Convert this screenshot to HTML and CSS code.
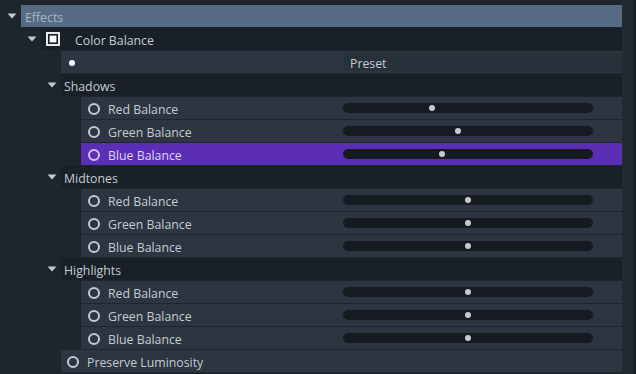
FILE: index.html
```html
<!DOCTYPE html>
<html lang="en">
  <head>
    <meta charset="UTF-8" />
    <title>Effects</title>
    <link rel="stylesheet" href="styles.css">
  </head>
  <body>
    <div class="panel">
      <div class="tree">
        <!-- Effects -->
        <div class="row">
          <span class="twisty"><svg width="10" height="6" viewBox="0 0 10 6"><polygon points="0.5,0.5 9.5,0.5 5,5.5" /></svg></span>
          <div class="cell cell-effects"><span class="label">Effects</span></div>
        </div>

        <!-- Color Balance -->
        <div class="row lvl1">
          <span class="twisty"><svg width="10" height="6" viewBox="0 0 10 6"><polygon points="0.5,0.5 9.5,0.5 5,5.5" /></svg></span>
          <div class="cell cell-dark">
            <svg class="check" width="14" height="14" viewBox="0 0 14 14">
              <rect x="1" y="1" width="12" height="12" fill="none" stroke="#fff" stroke-width="1.8" />
              <rect x="3.6" y="3.6" width="6.8" height="6.8" fill="#fff" />
            </svg>
            <span class="label">Color Balance</span>
          </div>
        </div>

        <div class="row lvl2">
          <span class="twisty"></span>
          <div class="cell">
            <span class="bullet"></span>
            <span class="label"></span>
            <div class="value"><span class="preset">Preset</span></div>
          </div>
        </div>

        <!-- Shadows -->
        <div class="row lvl2">
          <span class="twisty"><svg width="10" height="6" viewBox="0 0 10 6"><polygon points="0.5,0.5 9.5,0.5 5,5.5" /></svg></span>
          <div class="cell cell-dark"><span class="label label-group">Shadows</span></div>
        </div>
        <div class="row lvl3">
          <span class="twisty"></span>
          <div class="cell"><span class="radio"></span><span class="label">Red Balance</span>
            <div class="value"><div class="track"><span class="knob" style="left: 35.6%"></span></div></div></div>
        </div>
        <div class="row lvl3">
          <span class="twisty"></span>
          <div class="cell"><span class="radio"></span><span class="label">Green Balance</span>
            <div class="value"><div class="track"><span class="knob" style="left: 46%"></span></div></div></div>
        </div>
        <div class="row lvl3">
          <span class="twisty"></span>
          <div class="cell selected"><span class="radio"></span><span class="label">Blue Balance</span>
            <div class="value"><div class="track"><span class="knob" style="left: 39.6%"></span></div></div></div>
        </div>

        <!-- Midtones -->
        <div class="row lvl2">
          <span class="twisty"><svg width="10" height="6" viewBox="0 0 10 6"><polygon points="0.5,0.5 9.5,0.5 5,5.5" /></svg></span>
          <div class="cell cell-dark"><span class="label label-group">Midtones</span></div>
        </div>
        <div class="row lvl3">
          <span class="twisty"></span>
          <div class="cell"><span class="radio"></span><span class="label">Red Balance</span>
            <div class="value"><div class="track"><span class="knob" style="left: 50%"></span></div></div></div>
        </div>
        <div class="row lvl3">
          <span class="twisty"></span>
          <div class="cell"><span class="radio"></span><span class="label">Green Balance</span>
            <div class="value"><div class="track"><span class="knob" style="left: 50%"></span></div></div></div>
        </div>
        <div class="row lvl3">
          <span class="twisty"></span>
          <div class="cell"><span class="radio"></span><span class="label">Blue Balance</span>
            <div class="value"><div class="track"><span class="knob" style="left: 50%"></span></div></div></div>
        </div>

        <!-- Highlights -->
        <div class="row lvl2">
          <span class="twisty"><svg width="10" height="6" viewBox="0 0 10 6"><polygon points="0.5,0.5 9.5,0.5 5,5.5" /></svg></span>
          <div class="cell cell-dark"><span class="label label-group">Highlights</span></div>
        </div>
        <div class="row lvl3">
          <span class="twisty"></span>
          <div class="cell"><span class="radio"></span><span class="label">Red Balance</span>
            <div class="value"><div class="track"><span class="knob" style="left: 50%"></span></div></div></div>
        </div>
        <div class="row lvl3">
          <span class="twisty"></span>
          <div class="cell"><span class="radio"></span><span class="label">Green Balance</span>
            <div class="value"><div class="track"><span class="knob" style="left: 50%"></span></div></div></div>
        </div>
        <div class="row lvl3">
          <span class="twisty"></span>
          <div class="cell"><span class="radio"></span><span class="label">Blue Balance</span>
            <div class="value"><div class="track"><span class="knob" style="left: 50%"></span></div></div></div>
        </div>

        <div class="row lvl2">
          <span class="twisty"></span>
          <div class="cell cell-lum"><span class="radio"></span><span class="label">Preserve Luminosity</span></div>
        </div>
      </div>
      <div class="scrollbar"></div>
    </div>
  </body>
</html>
```

FILE: styles.css
```css
html,
body {
  margin: 0;
  height: 100%;
  background: #1f252d;
  overflow: hidden;
}
body {
  font-family: "Open Sans", "Noto Sans", sans-serif;
  font-size: 12.3px;
  color: #c6cbd1;
}
.panel {
  display: flex;
  height: 100%;
}
.tree {
  flex: 1;
  padding: 5px 0 0 1px;
}
.scrollbar {
  width: 11px;
  background: #232a32;
  border-right: 3px solid #1b2027;
}

/* ----- rows ----- */
.row {
  display: flex;
  height: 22px;
  margin-bottom: 1px;
}
.lvl1 {
  padding-left: 20px;
}
.lvl2 {
  padding-left: 40px;
}
.lvl3 {
  padding-left: 60px;
}
.twisty {
  width: 20px;
  flex: none;
  display: flex;
  align-items: center;
  justify-content: center;
}
.twisty svg {
  fill: #c4cad1;
  margin-left: 1px;
}
.cell {
  flex: 1;
  display: flex;
  align-items: center;
  background: #2c3540;
}
.cell-effects {
  background: #566c84;
  color: #a9b5c2;
  padding-left: 4px;
}
.cell-dark {
  background: #1a2028;
}
.selected {
  background: #5b2eb6;
  color: #ddd6f0;
}
.label {
  flex: 1;
  align-self: stretch;
  box-sizing: border-box;
  height: 22px;
  padding-top: 2px;
  line-height: 22px;
  white-space: nowrap;
}
.label-group {
  padding-left: 3px;
}

/* ----- icons ----- */
.check {
  margin: 0 15px 0 5px;
  flex: none;
}
.bullet {
  width: 6px;
  height: 6px;
  border-radius: 50%;
  background: #fff;
  margin: 1px 0 0 8px;
  flex: none;
}
.radio {
  width: 8px;
  height: 8px;
  border: 2px solid #c6cbd1;
  border-radius: 50%;
  margin: 1px 8px 0 7px;
  flex: none;
}
.selected .radio {
  border-color: #cfc3ec;
}
.cell-lum .radio {
  margin-left: 6px;
}

/* ----- value column ----- */
.value {
  width: 279px;
  flex: none;
  height: 22px;
  display: flex;
  align-items: center;
}
.preset {
  align-self: stretch;
  margin: 2px 0 2px 1px;
  flex: 1;
  background: #28303a;
  padding: 2px 0 0 6px;
  line-height: 18px;
  overflow: hidden;
}
.track {
  position: relative;
  width: 250px;
  height: 10px;
  border-radius: 5px;
  background: #161b22;
}
.knob {
  position: absolute;
  top: 2px;
  width: 6px;
  height: 6px;
  margin-left: -3px;
  border-radius: 50%;
  background: #c8cacd;
}
```
